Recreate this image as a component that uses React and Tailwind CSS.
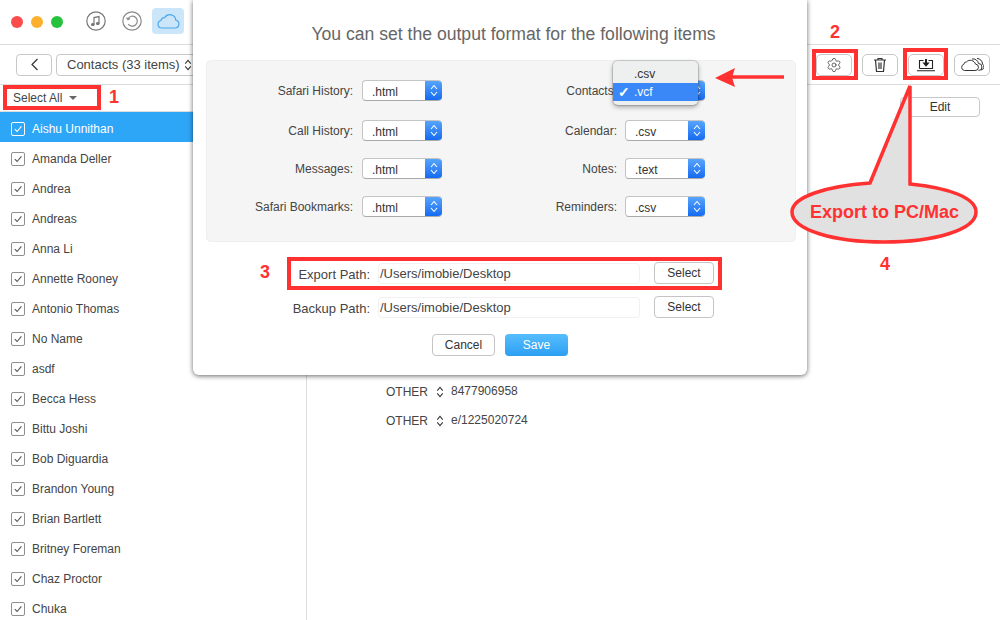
import React from "react";
import { Settings } from "lucide-react";

const names = ["Amanda Deller","Andrea","Andreas","Anna Li","Annette Rooney","Antonio Thomas","No Name","asdf","Becca Hess","Bittu Joshi","Bob Diguardia","Brandon Young","Brian Bartlett","Britney Foreman","Chaz Proctor","Chuka"];

const Check = ({ active }) => (
  <span className={`w-[14px] h-[14px] rounded-[2px] border flex items-center justify-center shrink-0 ${active ? "border-white" : "border-[#8f8f8f] bg-white"}`}>
    <svg width="10" height="10" viewBox="0 0 10 10" fill="none" stroke={active ? "#fff" : "#555"} strokeWidth="1.1"><path d="M1.8 5.2 4.1 7.5 8.4 2.3" /></svg>
  </span>
);

const Chevs = ({ color = "#fff", w = 8, h = 13 }) => (
  <svg width={w} height={h} viewBox="0 0 8 13" fill="none" stroke={color} strokeWidth="1.1"><path d="M1 5 4 1.5 7 5M1 8 4 11.5 7 8" /></svg>
);

const Sel = ({ v }) => (
  <div className="w-[80px] h-[21px] flex rounded-[4px] bg-white border border-[#c4c4c4] border-r-0 border-b-[#aaa] overflow-hidden">
    <span className="flex-1 pl-[9px] text-[12px] leading-[22px] text-[#333]">{v}</span>
    <span className="w-[17px] -my-px bg-gradient-to-b from-[#5aa7fb] to-[#0f67f0] flex items-center justify-center"><Chevs /></span>
  </div>
);

const Row = ({ l, v }) => (
  <div className="flex items-center h-[21px]">
    <span className="w-[155px] text-right pr-[9px] text-[12px] text-[#444]">{l}</span>
    <Sel v={v} />
  </div>
);

const Row2 = ({ l, v }) => (
  <div className="flex items-center h-[21px]">
    <span className="w-[114px] text-right pr-[8px] text-[12px] text-[#444]">{l}</span>
    <Sel v={v} />
  </div>
);

const PathRow = ({ l }) => (
  <div className="flex items-center h-[22px]">
    <span className="w-[185px] text-right pr-[8px] pt-[3px] text-[13px] text-[#444]">{l}</span>
    <span className="w-[262px] h-[21px] border border-[#f1f1f1] rounded-[4px] pl-[1px] text-[13px] leading-[20px] text-[#444]">/Users/imobie/Desktop</span>
    <button className="ml-[14px] w-[60px] h-[22px] rounded-[4px] border border-[#c4c4c4] bg-white text-[12px] text-[#333]">Select</button>
  </div>
);

const ToolBtn = ({ children, className = "" }) => (
  <div className={`w-[36px] h-[22px] rounded-[5px] border border-[#c8c8c8] bg-white flex items-center justify-center ${className}`}>{children}</div>
);

export default function App() {
  return (
    <div className="relative w-[1000px] h-[620px] overflow-hidden bg-white text-[#444] font-['Liberation_Sans',Arial,sans-serif]">
      {/* title bar */}
      <div className="h-[45px] border-b border-[#dcdcdc] flex items-center">
        <span className="ml-[11px] w-[12px] h-[12px] rounded-full bg-[#fb4b4b]" />
        <span className="ml-[8px] w-[12px] h-[12px] rounded-full bg-[#fdb02d]" />
        <span className="ml-[8px] w-[12px] h-[12px] rounded-full bg-[#27c23d]" />
        <svg className="ml-[23px] -mt-[3px]" width="20" height="20" viewBox="0 0 20 20" fill="none" stroke="#777" strokeWidth="1.2">
          <circle cx="10" cy="10" r="9.2" />
          <path d="M8 13.5V6.6L13 5.6V12.3" />
          <ellipse cx="6.8" cy="13.5" rx="1.3" ry="1" fill="#777" />
          <ellipse cx="11.8" cy="12.5" rx="1.3" ry="1" fill="#777" />
        </svg>
        <svg className="ml-[16px] -mt-[3px]" width="20" height="20" viewBox="0 0 20 20" fill="none" stroke="#888" strokeWidth="1.2">
          <circle cx="10" cy="10" r="9.2" />
          <path d="M6 7.6A5 5 0 1 1 6.2 13" />
          <path d="M4.6 6.6 6 8.6 8 7.4" />
        </svg>
        <div className="ml-[10px] -mt-[3px] w-[32px] h-[26px] rounded-[4px] bg-[#cce6f9] flex items-center justify-center">
          <svg width="24" height="16" viewBox="0 0 24 16" fill="none" stroke="#4aa8ee" strokeWidth="1.2">
            <path d="M5.5 15H19a4 4 0 0 0 .8-7.9A6 6 0 0 0 8.7 4.6 3.6 3.6 0 0 0 5 7.5 3.8 3.8 0 0 0 5.500 15Z" />
          </svg>
        </div>
      </div>
      {/* toolbar */}
      <div className="h-[40px] border-b border-[#dcdcdc] flex items-center pl-[16px] pr-[10px]">
        <div className="w-[36px] h-[22px] rounded-[4px] border border-[#c8c8c8] flex items-center justify-center">
          <svg width="9" height="13" viewBox="0 0 9 13" fill="none" stroke="#333" strokeWidth="1.2"><path d="M7.500 1 2 6.500 7.500 12" /></svg>
        </div>
        <div className="ml-[4px] w-[160px] h-[22px] rounded-[4px] border border-[#c8c8c8] flex items-center pl-[10px] gap-[4px] text-[13px] text-[#444]">
          <span>Contacts (33 items)</span>
          <Chevs color="#333" w={8} h={12} />
        </div>
        <div className="flex-1" />
        <ToolBtn className="mr-[10px]"><Settings size={16} strokeWidth={1.1} color="#333" /></ToolBtn>
        <ToolBtn className="mr-[10px]">
          <svg width="14" height="16" viewBox="0 0 14 16" fill="none" stroke="#333" strokeWidth="1.2"><path d="M1 3H13M5 3V1.500H9V3M2.500 3 3.500 14.500H10.500L11.500 3M6 5.500V12M8 5.500V12" /></svg>
        </ToolBtn>
        <ToolBtn className="mr-[10px]">
          <svg width="18" height="14" viewBox="0 0 18 14" fill="none" stroke="#222" strokeWidth="1.1"><path d="M2.500 10.500V2.500H6.500M11.500 2.500H15.500V10.500H2.500M0 12.700H18" /><path d="M9 1V6" strokeWidth="2" /><path d="M6.500 5 9 8 11.500 5Z" fill="#222" /></svg>
        </ToolBtn>
        <ToolBtn>
          <svg width="24" height="15" viewBox="0 0 24 15" fill="none" stroke="#333" strokeWidth="1"><path d="M4.500 13.500H15a3.200 3.200 0 0 0 .5-6.400A5.500 5.500 0 0 0 6.500 4.800 3 3 0 0 0 3.800 7.300 3.200 3.200 0 0 0 4.500 13.500Z" /><path d="M12 2A5.500 5.500 0 0 1 18.500 6.500a3.300 3.300 0 0 1 0 7" /><path d="M17 1.500A5.500 5.500 0 0 1 22.500 7a3.300 3.300 0 0 1-1.500 6" /></svg>
        </ToolBtn>
      </div>
      {/* body */}
      <div className="flex h-[535px]">
        <div className="w-[307px] shrink-0 border-r border-[#dcdcdc]">
          <div className="h-[27px] flex items-center pl-[13px] text-[12px] text-[#444] border-b border-[#dcdcdc]">
            Select All
            <span className="ml-[7px] w-0 h-0 border-x-[4px] border-x-transparent border-t-[4px] border-t-[#666]" />
          </div>
          <div className="h-[30px] pt-[4px] bg-[#2ea6f8] flex items-center pl-[11px] gap-[7px] text-[12px] text-white">
            <Check active />Aishu Unnithan
          </div>
          {names.map((n) => (
            <div key={n} className="h-[30px] pt-[4px] flex items-center pl-[11px] gap-[7px] text-[12px] text-[#444]">
              <Check />{n}
            </div>
          ))}
        </div>
        <div className="flex-1 flex flex-col relative">
          <div className="mt-[12px] mr-[20px] self-end w-[80px] h-[20px] rounded-[4px] border border-[#c8c8c8] flex items-center justify-center text-[12px] text-[#333]">Edit</div>
          <div className="mt-[267px] ml-[79px] flex flex-col gap-[14px] text-[12px] text-[#444]">
            <div className="flex items-center h-[15px]"><span className="w-[50px]">OTHER</span><Chevs color="#333" w={8} h={12} /><span className="ml-[7px] -mt-[2px]">8477906958</span></div>
            <div className="flex items-center h-[15px]"><span className="w-[50px]">OTHER</span><Chevs color="#333" w={8} h={12} /><span className="ml-[7px] -mt-[2px]">e/1225020724</span></div>
          </div>
        </div>
      </div>

      {/* modal */}
      <div className="absolute left-[193px] top-0 w-[614px] h-[375px] bg-white rounded-b-[6px] shadow-[0_1px_5px_rgba(0,0,0,0.6)] flex flex-col items-center">
        <div className="mt-[24px] ml-[27px] h-[21px] text-[17.6px] leading-[21px] text-[#666]">You can set the output format for the following items</div>
        <div className="mt-[15px] ml-[13px] self-start w-[590px] h-[182px] bg-[#f5f5f5] border border-[#efefef] rounded-[5px] flex pt-[19px]">
          <div className="w-[304px] flex flex-col">
            <Row l="Safari History:" v=".html" />
            <div className="mt-[19px]"><Row l="Call History:" v=".html" /></div>
            <div className="mt-[17px]"><Row l="Messages:" v=".html" /></div>
            <div className="mt-[17px]"><Row l="Safari Bookmarks:" v=".html" /></div>
          </div>
          <div className="flex flex-col">
            <Row2 l="Contacts:" v=".vcf" />
            <div className="mt-[19px]"><Row2 l="Calendar:" v=".csv" /></div>
            <div className="mt-[17px]"><Row2 l="Notes:" v=".text" /></div>
            <div className="mt-[17px]"><Row2 l="Reminders:" v=".csv" /></div>
          </div>
        </div>
        <div className="mt-[20px] self-start flex flex-col gap-[12px]">
          <PathRow l="Export Path:" />
          <PathRow l="Backup Path:" />
        </div>
        <div className="mt-[16px] flex gap-[10px]">
          <button className="w-[63px] h-[22px] rounded-[4px] border border-[#c4c4c4] bg-white text-[12px] text-[#333]">Cancel</button>
          <button className="w-[63px] h-[22px] rounded-[4px] bg-gradient-to-b from-[#56bdfd] to-[#2a9ff3] text-[12px] text-white">Save</button>
        </div>
      </div>

      {/* dropdown menu */}
      <div className="absolute left-[613px] top-[61px] w-[85px] h-[44px] rounded-[5px] overflow-hidden bg-[#eef0f0] text-[12px] text-[#333] pt-[4px]">
        <div className="h-[18px] leading-[18px] pl-[21px]">.csv</div>
        <div className="h-[18px] leading-[18px] pl-[5px] bg-[#3a88f8] text-white flex"><span className="w-[16px] text-[14px] font-bold">✓</span>.vcf</div>
      </div>
      <div className="absolute left-[613px] top-[61px] w-[85px] h-[44px] rounded-[5px] shadow-[0_0_0_1px_rgba(0,0,0,0.12),0_2px_5px_rgba(0,0,0,0.35)]" />

      {/* annotations */}
      <div className="absolute left-[3px] top-[85px] w-[98px] h-[25px] border-[4px] border-[#ff3131]" />
      <div className="absolute left-[812px] top-[49px] w-[46px] h-[31px] border-[4px] border-[#ff3131]" />
      <div className="absolute left-[903px] top-[48px] w-[45px] h-[32px] border-[4px] border-[#ff3131]" />
      <div className="absolute left-[287px] top-[257px] w-[435px] h-[33px] border-[4px] border-[#ff3131]" />
      <svg className="absolute left-0 top-0" width="1000" height="620" viewBox="0 0 1000 620" fill="none">
        <path d="M870 183 910 86 910 184C950 188 976 198 976 212 976 230 934 242 884 242 834 242 792 230 792 212 792 197 826 186 870 183Z" fill="#e1e1e1" stroke="#ff3131" strokeWidth="3.500" />
        <path d="M784 77H732" stroke="#ff3131" strokeWidth="3.500" />
        <path d="M715 78 735 68 732 77.500 735 87Z" fill="#ff3131" />
      </svg>
      <span className="absolute left-[109px] top-[87px] text-[18px] leading-[21px] font-bold text-[#ff3131]">1</span>
      <span className="absolute left-[830px] top-[22px] text-[18px] leading-[21px] font-bold text-[#ff3131]">2</span>
      <span className="absolute left-[260px] top-[262px] text-[18px] leading-[21px] font-bold text-[#ff3131]">3</span>
      <span className="absolute left-[880px] top-[254px] text-[18px] leading-[21px] font-bold text-[#ff3131]">4</span>
      <span className="absolute left-[810px] top-[202px] text-[18px] leading-[21px] font-bold text-[#ff3131]">Export to PC/Mac</span>
    </div>
  );
}
